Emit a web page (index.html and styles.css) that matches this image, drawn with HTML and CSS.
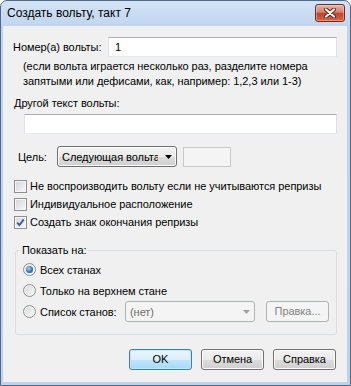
FILE: index.html
```html
<!DOCTYPE html>
<html lang="ru">
  <head>
    <meta charset="UTF-8" />
    <title>Создать вольту, такт 7</title>
    <link rel="stylesheet" href="styles.css">
  </head>
  <body>
    <div class="window">
      <div class="titlebar">
        <span class="title">Создать вольту, такт 7</span>
        <span class="close">
          <svg width="12" height="10" viewBox="0 0 12 10">
            <path d="M2 1.5 L10 8.5 M10 1.5 L2 8.5" stroke="#5a2118" stroke-width="4" stroke-linecap="round" />
            <path d="M2 1.5 L10 8.5 M10 1.5 L2 8.5" stroke="#ffffff" stroke-width="2.2" stroke-linecap="round" />
          </svg>
        </span>
      </div>

      <div class="content">
        <div class="row row-number">
          <span class="lbl-number">Номер(а) вольты:</span>
          <div class="textbox textbox-number">1</div>
        </div>
        <p class="note">(если вольта играется несколько раз, разделите номера<br />запятыми или дефисами, как, например: 1,2,3 или 1-3)</p>

        <div class="lbl-other">Другой текст вольты:</div>
        <div class="textbox textbox-other"></div>

        <div class="row row-target">
          <span class="lbl-target">Цель:</span>
          <div class="combo">
            <span class="combo-text">Следующая вольта</span>
            <svg class="arrow" width="7" height="4" viewBox="0 0 7 4"><path d="M0 0 H7 L3.5 4 Z" fill="#000" /></svg>
          </div>
          <div class="textbox textbox-small"></div>
        </div>

        <div class="checks">
          <div class="check-row"><span class="checkbox"></span>Не воспроизводить вольту если не учитываются репризы</div>
          <div class="check-row"><span class="checkbox"></span>Индивидуальное расположение</div>
          <div class="check-row">
            <span class="checkbox">
              <svg width="11" height="11" viewBox="0 0 11 11"><path d="M2.2 5.6 L4.4 8 L8.8 2.4" stroke="#3a5a95" stroke-width="1.8" fill="none" /></svg>
            </span>Создать знак окончания репризы
          </div>
        </div>

        <fieldset class="group">
          <legend>Показать на:</legend>
          <div class="radio-row"><span class="radio checked"><span class="dot"></span></span>Всех станах</div>
          <div class="radio-row"><span class="radio"></span>Только на верхнем стане</div>
          <div class="radio-row">
            <span class="radio"></span>
            <span class="lbl-list">Список станов:</span>
            <div class="combo combo-list">
              <span class="combo-text">(нет)</span>
              <svg class="arrow" width="7" height="4" viewBox="0 0 7 4"><path d="M0 0 H7 L3.5 4 Z" fill="#a0a0a0" /></svg>
            </div>
            <div class="btn btn-disabled">Правка...</div>
          </div>
        </fieldset>

        <div class="buttons">
          <div class="btn btn-default">OK</div>
          <div class="btn">Отмена</div>
          <div class="btn">Справка</div>
        </div>
      </div>
    </div>
  </body>
</html>
```

FILE: styles.css
```css
* {
  box-sizing: border-box;
  margin: 0;
  padding: 0;
}

body {
  margin: 0;
  font-family: "Liberation Sans", Arial, sans-serif;
  font-size: 11px;
  letter-spacing: -0.05px;
  color: #000000;
  background: #ffffff;
}

.window {
  width: 351px;
  height: 386px;
  border: 1px solid #52698a;
  border-radius: 7px 7px 0 0;
  background: linear-gradient(#d3e3f5, #bfd5ef 26px, #bcd2ed);
  padding: 0 3px 3px 2px;
  display: flex;
  flex-direction: column;
}

.titlebar {
  height: 25px;
  display: flex;
  justify-content: space-between;
  align-items: flex-start;
  padding: 3px 2px 0 4px;
}

.title {
  font-size: 12px;
  letter-spacing: 0;
  line-height: 18px;
}

.close {
  width: 30px;
  height: 18px;
  border: 1px solid #6b2a20;
  border-radius: 3px;
  background: linear-gradient(#eab3a5, #d98068 45%, #c4432b 52%, #d2644a);
  box-shadow: inset 0 0 0 1px rgba(255, 255, 255, 0.35);
  display: flex;
  align-items: center;
  justify-content: center;
}

.content {
  flex: 1;
  background: #f0f0f0;
  padding: 0 10px;
  display: flex;
  flex-direction: column;
  white-space: nowrap;
}

.row {
  display: flex;
  align-items: center;
}

.textbox {
  background: #ffffff;
  border: 1px solid;
  border-color: #abadb3 #dbdfe6 #e3e9ef #e2e3ea;
  height: 20px;
}

.row-number {
  margin-top: 11px;
  height: 20px;
}

.lbl-number {
  width: 95px;
}

.textbox-number {
  flex: 1;
  padding-left: 6px;
  line-height: 18px;
}

.note {
  margin: 2px 0 0 10px;
  line-height: 15px;
}

.lbl-other {
  margin: 7px 0 0 1px;
  line-height: 15px;
}

.textbox-other {
  margin: 3px 0 0 11px;
}

.row-target {
  margin-top: 12px;
  height: 21px;
}

.lbl-target {
  width: 39px;
  margin-left: 5px;
}

.combo {
  width: 120px;
  height: 21px;
  border: 1px solid #707070;
  border-radius: 3px;
  background: linear-gradient(#f2f2f2, #ebebeb 50%, #dddddd 51%, #cfcfcf);
  box-shadow: inset 0 0 0 1px #fbfbfb;
  display: flex;
  align-items: center;
  padding-left: 4px;
}

.combo-text {
  width: 96px;
  overflow: hidden;
}

.arrow {
  margin-left: auto;
  margin-right: 4px;
}

.textbox-small {
  width: 48px;
  margin-left: 6px;
  background: #f4f4f4;
  border-color: #c9c9c9;
}

.checks {
  margin-top: 10px;
}

.check-row {
  display: flex;
  align-items: center;
  height: 18px;
  padding-left: 1px;
  gap: 3px;
}

.checkbox {
  width: 13px;
  height: 13px;
  border: 1px solid #8e8f8f;
  background: linear-gradient(135deg, #d2d5da, #f8f8f8);
  box-shadow: inset 0 0 0 1px #f4f4f4;
  display: flex;
  align-items: center;
  justify-content: center;
}

.group {
  margin: 12px 0 0 2px;
  width: 322px;
  min-width: 0;
  border: 1px solid #d5dfe5;
  border-radius: 3px;
  padding: 1px 0 12px 0;
}

.group legend {
  margin-left: 4px;
  padding: 0 2px;
  line-height: 15px;
}

.radio-row {
  display: flex;
  align-items: center;
  height: 21px;
  padding-left: 7px;
  gap: 4px;
}

.radio {
  width: 13px;
  height: 13px;
  border-radius: 50%;
  border: 1px solid #8e8f8f;
  background: linear-gradient(135deg, #d4d6da, #fbfbfb);
  box-shadow: inset 0 0 0 1px #f4f4f4;
  display: flex;
  align-items: center;
  justify-content: center;
}

.radio .dot {
  width: 7px;
  height: 7px;
  border-radius: 50%;
  background: radial-gradient(circle at 40% 35%, #a9d6f6, #2f6fb4 60%, #17477e);
}

.lbl-list {
  width: 81px;
}

.combo-list {
  width: 130px;
  border-color: #adb2b5;
  background: #f4f4f4;
  box-shadow: none;
  color: #6d6d6d;
}

.combo-list .combo-text {
  width: auto;
}

.btn {
  width: 63px;
  height: 21px;
  border: 1px solid #707070;
  border-radius: 3px;
  background: linear-gradient(#f2f2f2, #ebebeb 50%, #dddddd 51%, #cfcfcf);
  box-shadow: inset 0 0 0 1px #fcfcfc;
  text-align: center;
  line-height: 19px;
}

.btn-disabled {
  margin-left: 7px;
  border-color: #adb2b5;
  background: #f4f4f4;
  box-shadow: none;
  color: #838383;
}

.btn-default {
  border-color: #3c7fb1;
  background: linear-gradient(#eaf6fd, #d9f0fc 50%, #bee6fd 51%, #a7d9f5);
  box-shadow: inset 0 0 0 1px #bfe8fc;
}

.buttons {
  display: flex;
  justify-content: flex-end;
  gap: 9px;
  margin: 14px 1px 0 0;
}
```
